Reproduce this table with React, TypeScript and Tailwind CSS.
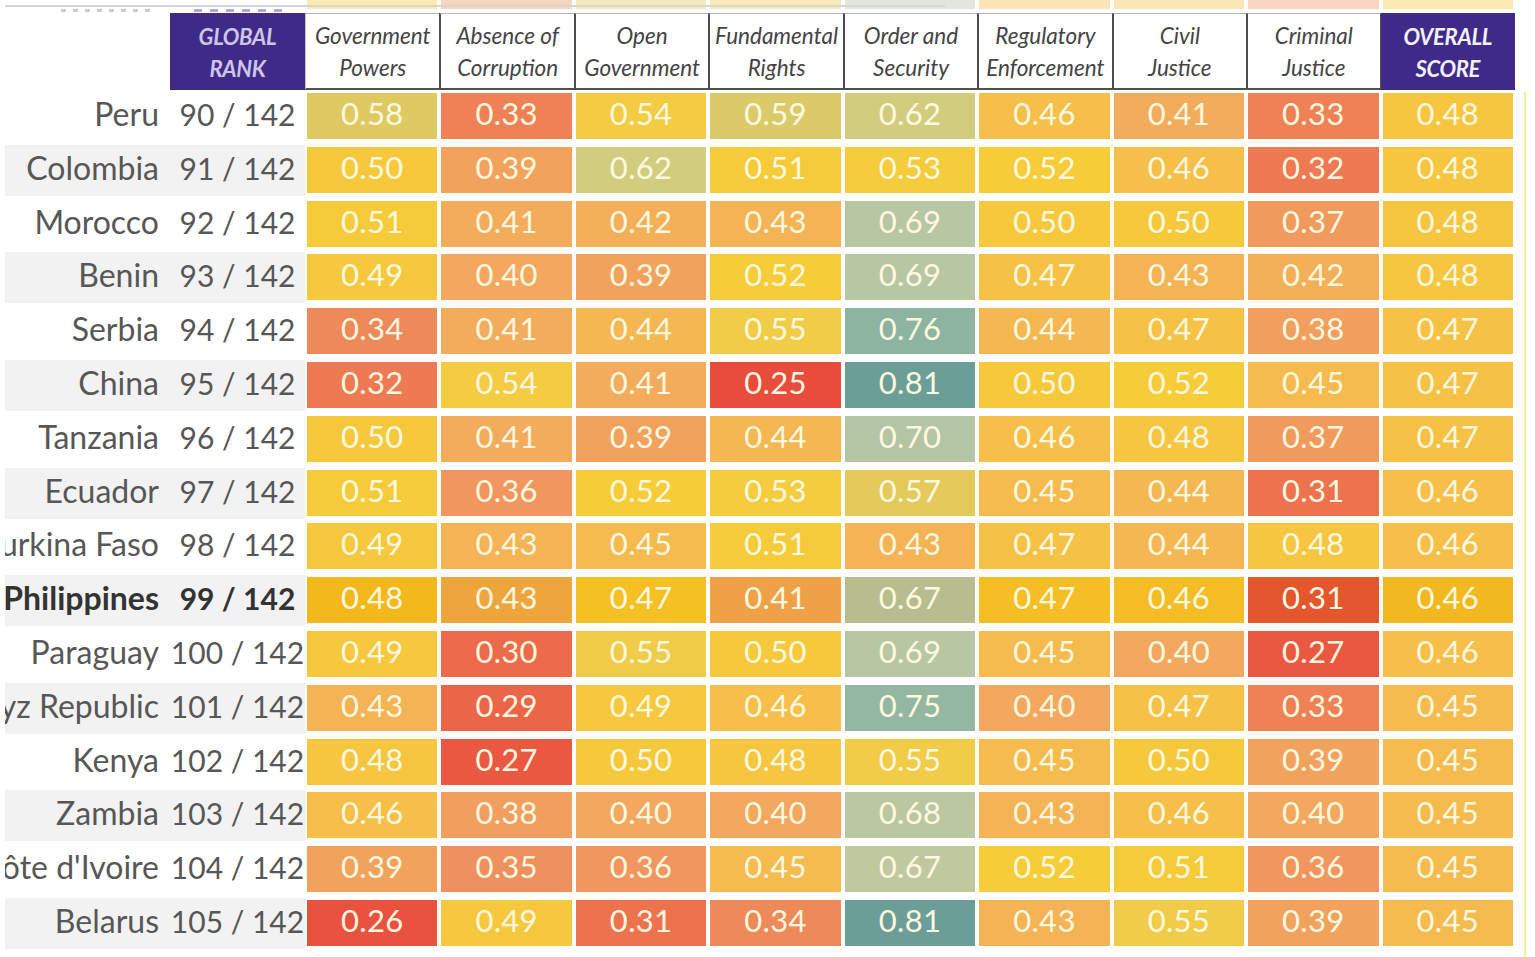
import React from "react";

type Row = { name: string; rank: number; vals: number[]; bold?: boolean };

const rows: Row[] = [
  { name: "Peru", rank: 90, vals: [0.58, 0.33, 0.54, 0.59, 0.62, 0.46, 0.41, 0.33, 0.48] },
  { name: "Colombia", rank: 91, vals: [0.5, 0.39, 0.62, 0.51, 0.53, 0.52, 0.46, 0.32, 0.48] },
  { name: "Morocco", rank: 92, vals: [0.51, 0.41, 0.42, 0.43, 0.69, 0.5, 0.5, 0.37, 0.48] },
  { name: "Benin", rank: 93, vals: [0.49, 0.4, 0.39, 0.52, 0.69, 0.47, 0.43, 0.42, 0.48] },
  { name: "Serbia", rank: 94, vals: [0.34, 0.41, 0.44, 0.55, 0.76, 0.44, 0.47, 0.38, 0.47] },
  { name: "China", rank: 95, vals: [0.32, 0.54, 0.41, 0.25, 0.81, 0.5, 0.52, 0.45, 0.47] },
  { name: "Tanzania", rank: 96, vals: [0.5, 0.41, 0.39, 0.44, 0.7, 0.46, 0.48, 0.37, 0.47] },
  { name: "Ecuador", rank: 97, vals: [0.51, 0.36, 0.52, 0.53, 0.57, 0.45, 0.44, 0.31, 0.46] },
  { name: "Burkina Faso", rank: 98, vals: [0.49, 0.43, 0.45, 0.51, 0.43, 0.47, 0.44, 0.48, 0.46] },
  { name: "Philippines", rank: 99, vals: [0.48, 0.43, 0.47, 0.41, 0.67, 0.47, 0.46, 0.31, 0.46], bold: true },
  { name: "Paraguay", rank: 100, vals: [0.49, 0.3, 0.55, 0.5, 0.69, 0.45, 0.4, 0.27, 0.46] },
  { name: "Kyrgyz Republic", rank: 101, vals: [0.43, 0.29, 0.49, 0.46, 0.75, 0.4, 0.47, 0.33, 0.45] },
  { name: "Kenya", rank: 102, vals: [0.48, 0.27, 0.5, 0.48, 0.55, 0.45, 0.5, 0.39, 0.45] },
  { name: "Zambia", rank: 103, vals: [0.46, 0.38, 0.4, 0.4, 0.68, 0.43, 0.46, 0.4, 0.45] },
  { name: "Côte d'Ivoire", rank: 104, vals: [0.39, 0.35, 0.36, 0.45, 0.67, 0.52, 0.51, 0.36, 0.45] },
  { name: "Belarus", rank: 105, vals: [0.26, 0.49, 0.31, 0.34, 0.81, 0.43, 0.55, 0.39, 0.45] },
];

const philColors = ["#f3b91c", "#eea63c", "#f5c023", "#eea147", "#b7bd8e", "#f4be24", "#f4bd25", "#e3562e", "#f1b820"];

const stops: [number, string][] = [
  [0.25, "#e84c3c"],
  [0.3, "#ec6b4b"],
  [0.35, "#ef915e"],
  [0.4, "#f2a85e"],
  [0.44, "#f4b752"],
  [0.48, "#f6c640"],
  [0.52, "#f6cc38"],
  [0.55, "#f1cc48"],
  [0.58, "#dec963"],
  [0.62, "#d2cd7e"],
  [0.67, "#bfc89e"],
  [0.7, "#b3c5a5"],
  [0.76, "#8cb4a0"],
  [0.81, "#6b9e96"],
];

function hex(c: string) {
  return [1, 3, 5].map((i) => parseInt(c.slice(i, i + 2), 16));
}

function colorFor(v: number) {
  if (v <= stops[0][0]) return stops[0][1];
  for (let i = 0; i < stops.length - 1; i++) {
    const [a, ca] = stops[i];
    const [b, cb] = stops[i + 1];
    if (v >= a && v <= b) {
      const t = (v - a) / (b - a);
      const A = hex(ca);
      const B = hex(cb);
      const m = A.map((x, k) => Math.round(x + (B[k] - x) * t));
      return `rgb(${m[0]},${m[1]},${m[2]})`;
    }
  }
  return stops[stops.length - 1][1];
}

const headers = [
  ["Government", "Powers"],
  ["Absence of", "Corruption"],
  ["Open", "Government"],
  ["Fundamental", "Rights"],
  ["Order and", "Security"],
  ["Regulatory", "Enforcement"],
  ["Civil", "Justice"],
  ["Criminal", "Justice"],
];

const grid = "grid grid-cols-[165px_135px_repeat(9,minmax(0,1fr))]";

export default function App() {
  return (
    <div className="w-[1535px] h-[957px] bg-white overflow-hidden flex font-['Lato',sans-serif]">
      <div className="w-[1515px] pl-[5px]">
        {/* clipped previous row (only faint remnants visible) */}
        <div className="h-[13px] relative overflow-hidden">
          <div className={`${grid} grid-rows-[13px] h-[13px]`}>
            <div className="flex items-end justify-end gap-[7px] pr-[20px] pb-[1px] opacity-50">
              {[0, 1, 2, 3, 4, 5, 6, 7].map((i) => (
                <div key={i} className="w-[5px] h-[3px] bg-[#9a9a9a]" />
              ))}
            </div>
            <div className="flex items-end justify-center gap-[8px] pb-[1px] opacity-40">
              {[0, 1, 2, 3, 4, 5].map((i) => (
                <div key={i} className="w-[8px] h-[3px] bg-[#3f2a88]" />
              ))}
            </div>
            {[0.53, 0.36, 0.57, 0.55, 0.7, 0.46, 0.47, 0.36, 0.49].map((v, i) => (
              <div key={i} className="px-[2px]">
                <div className="h-[9px] opacity-40" style={{ background: colorFor(v) }} />
              </div>
            ))}
          </div>
          <div className="absolute left-0 top-[5px] h-[2px] w-[940px] bg-[#d6d6d6]" />
        </div>

        {/* header */}
        <div className={`${grid} grid-rows-[77px] h-[77px]`}>
          <div />
          <div className="bg-[#3f2a88] flex flex-col items-center justify-center pt-[2px] text-[22px] leading-[32px] italic font-bold text-[#cdc5e8] tracking-[-0.3px]">
            <span>GLOBAL</span>
            <span>RANK</span>
          </div>
          {headers.map((h, i) => (
            <div
              key={i}
              className={`bg-white flex flex-col items-center justify-center pt-[2px] border-t border-t-[#b5b5b5] border-b-2 border-b-[#505050] text-[22.5px] leading-[32px] italic text-[#444] whitespace-nowrap ${
                i === 0 ? "border-l border-l-[#c8c8c8]" : "border-l-2 border-l-[#4d4d4d]"
              } ${i === 7 ? "border-r border-r-[#4d4d4d]" : ""}`}
            >
              <span>{h[0]}</span>
              <span>{h[1]}</span>
            </div>
          ))}
          <div className="bg-[#3f2a88] flex flex-col items-center justify-center pt-[2px] text-[22px] leading-[32px] italic font-bold text-[#f4f1ff] tracking-[-0.3px]">
            <span>OVERALL</span>
            <span>SCORE</span>
          </div>
        </div>

        {/* rows */}
        {rows.map((r, ri) => {
          const band = ri % 2 === 1 ? "bg-[#f2f2f2]" : "bg-white";
          const txt = r.bold ? "font-bold text-[#333]" : "text-[#575757]";
          return (
            <div key={r.name} className={`${grid} grid-rows-[53.8px] h-[53.8px]`}>
              <div className={`h-[51px] mt-[1px] flex items-center justify-end overflow-hidden pr-[11px] pb-[5px] leading-none text-[32px] ${band} ${txt}`}>
                <span className="whitespace-nowrap">{r.name}</span>
              </div>
              <div className={`h-[51px] mt-[1px] flex items-center justify-center pb-[5px] leading-none text-[30px] whitespace-nowrap ${band} ${txt}`}>
                {r.rank} / 142
              </div>
              {r.vals.map((v, ci) => (
                <div key={ci} className="px-[2px] pt-[3px]">
                  <div
                    className="h-[46px] flex items-center justify-center leading-none text-[31px] tracking-[0.3px] text-[#fff8e0] pb-[5px]"
                    style={{ background: r.bold ? philColors[ci] : colorFor(v) }}
                  >
                    {v.toFixed(2)}
                  </div>
                </div>
              ))}
            </div>
          );
        })}
      </div>
      <div className="w-[20px] flex justify-center pt-[92px]">
        <div className="w-[2px] h-full bg-[#f3ec9e]" />
      </div>
    </div>
  );
}
